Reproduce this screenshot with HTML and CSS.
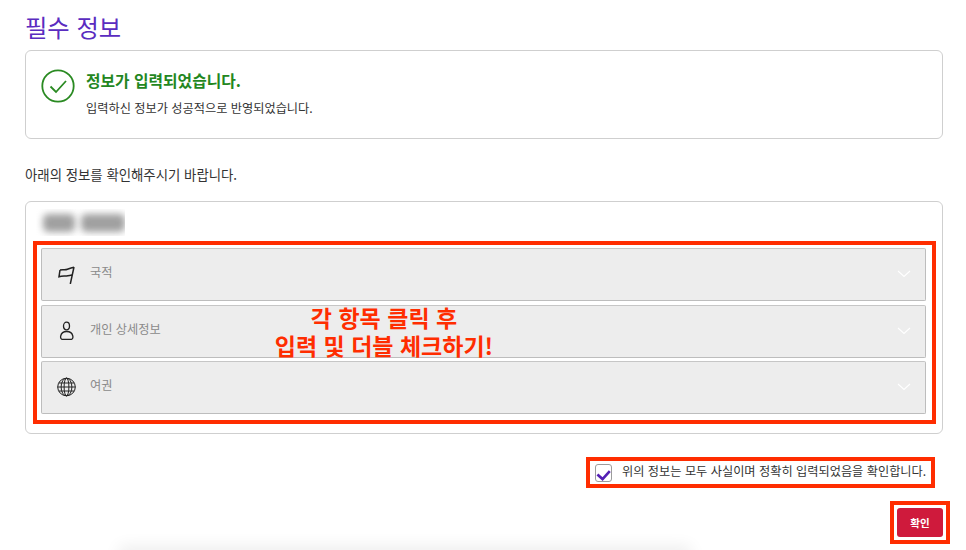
FILE: index.html
```html
<!DOCTYPE html>
<html lang="ko">
<head>
<meta charset="utf-8">
<title>필수 정보</title>
<link rel="stylesheet" href="styles.css">
</head>
<body>
<main class="page">
  <h1 class="title">필수 정보</h1>
  <section class="card notice">
    <svg class="ok-icon" viewBox="0 0 34 34" width="34" height="34" aria-hidden="true">
      <circle cx="17" cy="17" r="15.700" fill="none" stroke="#2a8a22" stroke-width="1.800"/>
      <path d="M9.500 17.500l5.500 5.500L25 12" fill="none" stroke="#2a8a22" stroke-width="1.800"/>
    </svg>
    <div class="notice-text">
      <h2 class="notice-title">정보가 입력되었습니다.</h2>
      <p class="notice-sub">입력하신 정보가 성공적으로 반영되었습니다.</p>
    </div>
  </section>
  <p class="lead">아래의 정보를 확인해주시기 바랍니다.</p>
  <section class="card details">
    <div class="blur-wrap">
      <div class="blur-name"><span class="blur a"></span><span class="blur b"></span></div>
    </div>
    <div class="rows-mark">
      <div class="row">
        <svg class="row-icon" viewBox="0 0 20 20" width="20" height="20" aria-hidden="true">
          <path d="M3 6C6 5.300 8 6.300 10.500 5.300S15 3.300 17 3.200M3 6L2 12.700C5 11.800 7.500 12.300 9.500 12S13 11.300 14.700 11M17 3L13.300 20" fill="none" stroke="#222" stroke-width="1.500"/>
        </svg>
        <span class="row-label">국적</span>
        <svg class="chev" viewBox="0 0 14 8" width="14" height="8" aria-hidden="true"><path d="M1 1l6 5.500L13 1" fill="none" stroke="#fff" stroke-width="1.100"/></svg>
      </div>
      <div class="row">
        <svg class="row-icon" viewBox="0 0 20 20" width="20" height="20" aria-hidden="true">
          <ellipse cx="9.500" cy="6" rx="3" ry="3.800" fill="none" stroke="#222" stroke-width="1.300"/>
          <path d="M6 19.500H13.500C15.500 19.500 16.200 18 15.800 16C15.200 13 13 11.500 9.700 11.500S4.300 13 3.700 16C3.300 18 4 19.500 6 19.500Z" fill="none" stroke="#222" stroke-width="1.300"/>
        </svg>
        <span class="row-label">개인 상세정보</span>
        <svg class="chev" viewBox="0 0 14 8" width="14" height="8" aria-hidden="true"><path d="M1 1l6 5.500L13 1" fill="none" stroke="#fff" stroke-width="1.100"/></svg>
      </div>
      <div class="row">
        <svg class="row-icon" viewBox="0 0 20 20" width="20" height="20" aria-hidden="true">
          <g fill="none" stroke="#222" stroke-width="1">
            <circle cx="9.500" cy="10" r="8.800"/>
            <ellipse cx="9.500" cy="10" rx="5.400" ry="8.800"/>
            <ellipse cx="9.500" cy="10" rx="2.400" ry="8.800"/>
            <path d="M.7 10h17.600M1.700 6h15.600M1.700 14h15.600"/>
          </g>
        </svg>
        <span class="row-label">여권</span>
        <svg class="chev" viewBox="0 0 14 8" width="14" height="8" aria-hidden="true"><path d="M1 1l6 5.500L13 1" fill="none" stroke="#fff" stroke-width="1.100"/></svg>
      </div>
      <p class="callout">각 항목 클릭 후<br>입력 및 더블 체크하기!</p>
    </div>
  </section>
  <div class="confirm-line">
    <label class="confirm">
      <span class="checkbox">
        <svg viewBox="0 0 16 16" width="16" height="16" aria-hidden="true"><path d="M1.500 9.500l5.500 5L14.700 6" fill="none" stroke="#5420b4" stroke-width="2.800"/></svg>
      </span>
      <span class="confirm-text">위의 정보는 모두 사실이며 정확히 입력되었음을 확인합니다.</span>
    </label>
  </div>
  <div class="actions">
    <div class="submit-mark"><button class="submit" type="button">확인</button></div>
  </div>
</main>
<div class="bottom-shade"></div>
</body>
</html>
```

FILE: styles.css
```css
html, body {
  margin: 0;
  height: 550px;
  overflow: hidden;
  background: #fff;
}
body {
  position: relative;
  font-family: "Noto Sans CJK KR", "Liberation Sans", sans-serif;
  color: #333;
}
.page {
  padding: 0 23px 0 25px;
}
.title {
  margin: 0;
  height: 50px;
  font-size: 24.300px;
  line-height: 53px;
  font-weight: 400;
  color: #5a2cc0;
}
.card {
  box-sizing: border-box;
  border: 1px solid #cfcfcf;
  border-radius: 6px;
  background: #fff;
}
.notice {
  height: 89px;
  display: flex;
  align-items: flex-start;
  padding: 18px 0 0 15px;
}
.ok-icon {
  flex: none;
}
.notice-text {
  margin-left: 11px;
}
.notice-title {
  margin: 0;
  font-size: 15.800px;
  line-height: 24px;
  font-weight: 700;
  color: #23871e;
}
.notice-sub {
  margin: 4px 0 0;
  font-size: 12.200px;
  line-height: 22px;
  color: #333;
}
.lead {
  margin: 0;
  height: 62px;
  box-sizing: border-box;
  padding-top: 25px;
  font-size: 13.400px;
  line-height: 20px;
  color: #333;
}
.details {
  height: 233px;
  padding: 0 6px 0 7px;
}
.blur-wrap {
  height: 39px;
  padding: 7px 0 0 3px;
  box-sizing: border-box;
}
.blur-name {
  display: flex;
  gap: 6px;
  width: 89px;
  height: 27px;
  padding: 5px 0 0 7px;
  box-sizing: border-box;
  overflow: hidden;
}
.blur {
  display: block;
  flex: none;
  height: 18px;
  background: #a0a0a0;
  border-radius: 5px;
  filter: blur(3.500px);
}
.blur.a { width: 32px; }
.blur.b { width: 44px; }
.rows-mark {
  position: relative;
  box-sizing: border-box;
  height: 183px;
  border: 4px solid #ff2d00;
  padding: 3px 6px 0 4px;
  display: flex;
  flex-direction: column;
  gap: 4px;
}
.row {
  box-sizing: border-box;
  height: 53px;
  display: flex;
  align-items: center;
  padding: 0 14px 0 15px;
  background: #ededed;
  border: 1px solid #bdbdbd;
  border-top-color: #c6c6c6;
  border-radius: 2px;
  margin-bottom: -0.500px;
}
.row-icon {
  flex: none;
  margin-bottom: 2px;
}
.row-label {
  margin-left: 13px;
  margin-bottom: 5px;
  font-size: 12.200px;
  color: #8a8a8a;
}
.chev {
  margin-left: auto;
  margin-top: -1px;
}
.callout {
  position: absolute;
  left: 227px;
  top: 58px;
  width: 240px;
  margin: 0;
  text-align: center;
  font-size: 23px;
  line-height: 28px;
  font-weight: 700;
  color: #ff2d00;
}
.confirm-line {
  display: flex;
  justify-content: flex-end;
  padding: 23px 8px 0 0;
}
.confirm {
  box-sizing: border-box;
  width: 349px;
  height: 31px;
  display: flex;
  align-items: center;
  gap: 10px;
  padding-left: 5px;
  border: 4px solid #ff2d00;
  font-size: 12.200px;
  color: #333;
}
.confirm-text {
  margin-bottom: 3px;
}
.checkbox {
  box-sizing: border-box;
  flex: none;
  width: 17px;
  height: 18px;
  border: 1px solid #9c9c9c;
  border-radius: 3px;
  display: flex;
}
.actions {
  display: flex;
  justify-content: flex-end;
  padding-top: 13px;
}
.submit-mark {
  display: flex;
  padding: 3px;
  margin-right: -7px;
  border: 4px solid #ff2d00;
}
.submit {
  width: 46px;
  height: 29px;
  padding: 0;
  border: 0;
  border-radius: 3px;
  background: #cf1a3c;
  color: #fff;
  font: 700 10.500px "Noto Sans CJK KR", "Liberation Sans", sans-serif;
}
.bottom-shade {
  position: absolute;
  left: 125px;
  width: 560px;
  top: 552px;
  height: 8px;
  box-shadow: 0 0 16px 6px rgba(0, 0, 0, 0.07);
}
```
